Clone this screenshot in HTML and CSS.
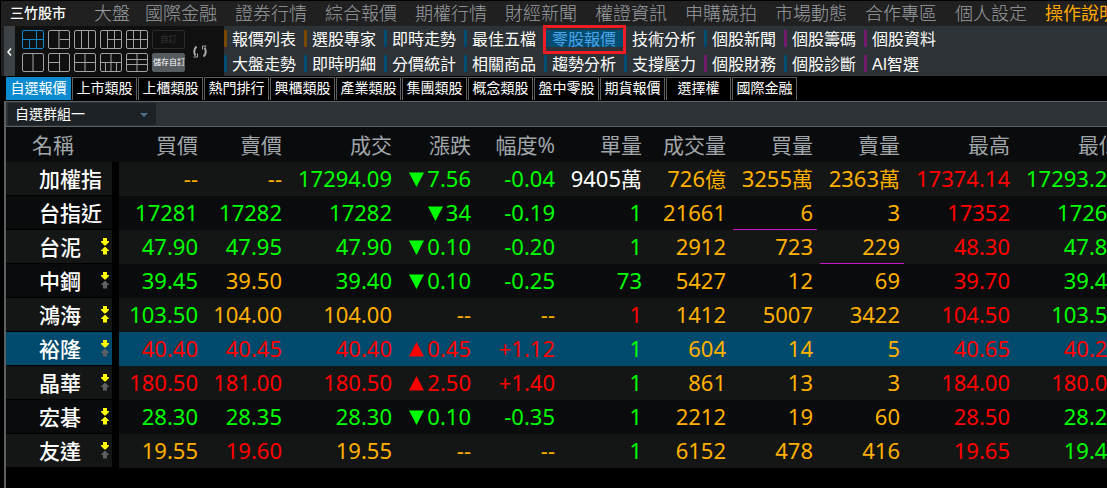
FILE: index.html
```html
<!DOCTYPE html>
<html lang="zh-Hant">
<head>
<meta charset="utf-8">
<title>三竹股市</title>
<link rel="stylesheet" href="styles.css">
</head>
<body>
<svg class="defs" aria-hidden="true">
  <symbol id="down" viewBox="0 0 15 15"><path d="M0 .5H15L7.5 15Z" fill="currentColor"/></symbol>
  <symbol id="up" viewBox="0 0 15 15"><path d="M7.500 0L15 14.500H0Z" fill="currentColor"/></symbol>
  <symbol id="both" viewBox="0 0 8 17"><path d="M2 0H6V3H8V4L4.500 7.500H3.500L0 4V3H2Z" fill="#ff0"/><path class="second" d="M3.500 9H4.500L8 12.500V13H6V16.500H2V13H0V12.500Z" fill="currentColor"/></symbol>
</svg>
<header class="topbar">
  <h1 class="brand">三竹股市</h1>
  <nav class="main-nav">
    <a href="#">大盤</a><a href="#">國際金融</a><a href="#">證券行情</a><a href="#">綜合報價</a><a href="#">期權行情</a><a href="#">財經新聞</a><a href="#">權證資訊</a><a href="#">申購競拍</a><a href="#">市場動態</a><a href="#">合作專區</a><a href="#">個人設定</a><a href="#" class="help">操作說明</a>
  </nav>
</header>
<div class="toolbar">
  <button class="collapse" aria-label="收合"><svg width="5" height="8" viewBox="0 0 5 8"><path d="M4 .5L1 4L4 7.500" fill="none" stroke="#fff" stroke-width="1.500"/></svg></button>
  <div class="layouts">
    <div class="layout-grid">
      <button class="layout active" aria-label="版面 1"><svg viewBox="0 0 22 19"><rect x=".5" y=".5" width="21" height="18" rx="1.500"/><path d="M1 9.500H21M14.500 1V18M7.500 10V18"/></svg></button>
      <button class="layout" aria-label="版面 2"><svg viewBox="0 0 22 19"><path class="thick" d="M11 1V18"/><rect x=".5" y=".5" width="21" height="18" rx="1.500"/><path d="M12 9.500H21"/></svg></button>
      <button class="layout" aria-label="版面 3"><svg viewBox="0 0 22 19"><rect x=".5" y=".5" width="21" height="18" rx="1.500"/><path d="M7.500 1V18M14.500 1V18"/></svg></button>
      <button class="layout" aria-label="版面 4"><svg viewBox="0 0 22 19"><rect x=".5" y=".5" width="21" height="18" rx="1.500"/><path d="M7.500 1V18M14.500 1V18M8 9.500H21"/></svg></button>
      <button class="layout" aria-label="版面 5"><svg viewBox="0 0 22 19"><rect x=".5" y=".5" width="21" height="18" rx="1.500"/><path d="M7.500 1V18M14.500 1V18M1 9.500H21"/></svg></button>
      <button class="layout" aria-label="版面 6"><svg viewBox="0 0 22 19"><path class="thick" d="M11 1V18"/><rect x=".5" y=".5" width="21" height="18" rx="1.500"/></svg></button>
      <button class="layout" aria-label="版面 7"><svg viewBox="0 0 22 19"><rect x=".5" y=".5" width="21" height="18" rx="1.500"/><path d="M11.500 1V18M1 9.500H11"/></svg></button>
      <button class="layout" aria-label="版面 8"><svg viewBox="0 0 22 19"><path class="thick" d="M11 1V18"/><rect x=".5" y=".5" width="21" height="18" rx="1.500"/><path d="M1 9.500H21"/></svg></button>
      <button class="layout" aria-label="版面 9"><svg viewBox="0 0 22 19"><path class="thick" d="M11 1V18"/><rect x=".5" y=".5" width="21" height="18" rx="1.500"/><path d="M1 9.500H21M5.500 10V18M16.500 10V18"/></svg></button>
      <button class="layout" aria-label="版面 10"><svg viewBox="0 0 22 19"><path class="thick" d="M11 1V18"/><rect x=".5" y=".5" width="21" height="18" rx="1.500"/><path d="M1 6.500H21M1 11.500H21"/></svg></button>
    </div>
    <div class="custom">
      <button class="custom-btn" disabled>自訂</button>
      <button class="custom-btn save">儲存自訂</button>
    </div>
    <button class="swap" aria-label="切換"><svg width="14" height="13" viewBox="0 0 14 13" fill="none" stroke="#a8a8a8"><path d="M3.500 1.500Q-.5 5.500 2.500 10.500" stroke-width="2"/><path d="M.5 12H4.500V8.500"/><path d="M10.500 11.500Q14.500 7.500 11.500 2.500" stroke-width="2"/><path d="M13.500 1H9.500V4.500"/></svg></button>
  </div>
  <nav class="functions">
    <a href="#" class="fn brown">報價列表</a><a href="#" class="fn brown">選股專家</a><a href="#" class="fn">即時走勢</a><a href="#" class="fn">最佳五檔</a><a href="#" class="fn current">零股報價</a><a href="#" class="fn plain">技術分析</a><a href="#" class="fn">個股新聞</a><a href="#" class="fn purple">個股籌碼</a><a href="#" class="fn purple">個股資料</a>
    <a href="#" class="fn">大盤走勢</a><a href="#" class="fn">即時明細</a><a href="#" class="fn">分價統計</a><a href="#" class="fn">相關商品</a><a href="#" class="fn">趨勢分析</a><a href="#" class="fn">支撐壓力</a><a href="#" class="fn purple">個股財務</a><a href="#" class="fn">個股診斷</a><a href="#" class="fn purple">AI智選</a>
  </nav>
</div>
<nav class="tabs">
  <a href="#" class="tab active">自選報價</a><a href="#" class="tab">上市類股</a><a href="#" class="tab">上櫃類股</a><a href="#" class="tab">熱門排行</a><a href="#" class="tab">興櫃類股</a><a href="#" class="tab">產業類股</a><a href="#" class="tab">集團類股</a><a href="#" class="tab">概念類股</a><a href="#" class="tab">盤中零股</a><a href="#" class="tab">期貨報價</a><a href="#" class="tab">選擇權</a><a href="#" class="tab">國際金融</a>
</nav>
<main class="panel">
  <div class="groupbar">
    <div class="group">
      <select aria-label="自選群組"><option>自選群組一</option></select>
      <svg class="caret" width="8" height="4" viewBox="0 0 8 4"><path d="M0 0H8L4 4Z" fill="#47718e"/></svg>
    </div>
  </div>
  <div class="quotes">
    <table>
      <colgroup><col class="w-name"><col class="w-bid"><col class="w-ask"><col class="w-wide"><col class="w-chg"><col class="w-ask"><col class="w-vol"><col class="w-ask"><col class="w-vol"><col class="w-vol"><col class="w-wide"><col class="w-wide"></colgroup>
      <thead>
        <tr><th>名稱</th><th>買價</th><th>賣價</th><th>成交</th><th>漲跌</th><th>幅度%</th><th>單量</th><th>成交量</th><th>買量</th><th>賣量</th><th>最高</th><th>最低</th></tr>
      </thead>
      <tbody>
        <tr><th><div class="name">加權指</div></th><td>--</td><td>--</td><td class="g">17294.09</td><td class="g"><svg class="tri"><use href="#down"/></svg>7.56</td><td class="g">-0.04</td><td class="w">9405<span class="unit">萬</span></td><td>726<span class="unit">億</span></td><td>3255<span class="unit">萬</span></td><td>2363<span class="unit">萬</span></td><td class="r">17374.14</td><td class="g">17293.22</td></tr>
        <tr><th><div class="name">台指近</div></th><td class="g">17281</td><td class="g">17282</td><td class="g">17282</td><td class="g"><svg class="tri"><use href="#down"/></svg>34</td><td class="g">-0.19</td><td class="g">1</td><td>21661</td><td class="mark">6</td><td>3</td><td class="r">17352</td><td class="g">17260</td></tr>
        <tr><th><div class="name">台泥<svg class="trade"><use href="#both"/></svg></div></th><td class="g">47.90</td><td class="g">47.95</td><td class="g">47.90</td><td class="g"><svg class="tri"><use href="#down"/></svg>0.10</td><td class="g">-0.20</td><td class="g">1</td><td>2912</td><td>723</td><td class="mark">229</td><td class="r">48.30</td><td class="g">47.80</td></tr>
        <tr><th><div class="name">中鋼<svg class="trade off"><use href="#both"/></svg></div></th><td class="g">39.45</td><td>39.50</td><td class="g">39.40</td><td class="g"><svg class="tri"><use href="#down"/></svg>0.10</td><td class="g">-0.25</td><td class="g">73</td><td>5427</td><td>12</td><td>69</td><td class="r">39.70</td><td class="g">39.40</td></tr>
        <tr><th><div class="name">鴻海<svg class="trade"><use href="#both"/></svg></div></th><td class="g">103.50</td><td>104.00</td><td>104.00</td><td>--</td><td>--</td><td class="r">1</td><td>1412</td><td>5007</td><td>3422</td><td class="r">104.50</td><td class="g">103.50</td></tr>
        <tr class="selected"><th><div class="name">裕隆<svg class="trade off"><use href="#both"/></svg></div></th><td class="r">40.40</td><td class="r">40.45</td><td class="r">40.40</td><td class="r"><svg class="tri"><use href="#up"/></svg>0.45</td><td class="r">+1.12</td><td class="g">1</td><td>604</td><td>14</td><td>5</td><td class="r">40.65</td><td class="r">40.20</td></tr>
        <tr><th><div class="name">晶華<svg class="trade off"><use href="#both"/></svg></div></th><td class="r">180.50</td><td class="r">181.00</td><td class="r">180.50</td><td class="r"><svg class="tri"><use href="#up"/></svg>2.50</td><td class="r">+1.40</td><td class="g">1</td><td>861</td><td>13</td><td>3</td><td class="r">184.00</td><td class="r">180.00</td></tr>
        <tr><th><div class="name">宏碁<svg class="trade"><use href="#both"/></svg></div></th><td class="g">28.30</td><td class="g">28.35</td><td class="g">28.30</td><td class="g"><svg class="tri"><use href="#down"/></svg>0.10</td><td class="g">-0.35</td><td class="g">1</td><td>2212</td><td>19</td><td>60</td><td class="r">28.50</td><td class="g">28.20</td></tr>
        <tr><th><div class="name">友達<svg class="trade off"><use href="#both"/></svg></div></th><td>19.55</td><td class="r">19.60</td><td>19.55</td><td>--</td><td>--</td><td class="g">1</td><td>6152</td><td>478</td><td>416</td><td class="r">19.65</td><td class="g">19.45</td></tr>
      </tbody>
    </table>
  </div>
</main>
</body>
</html>
```
FILE: styles.css
```css
* { box-sizing: border-box; }

body {
  margin: 0;
  min-height: 100vh;
  display: flex;
  flex-direction: column;
  overflow: hidden;
  background: #000;
  border-left: 1px solid #000;
  border-top: 1px solid #000;
  color: #fff;
  font-family: "Liberation Sans", "Noto Sans CJK TC", sans-serif;
}

a { color: inherit; text-decoration: none; }
button { padding: 0; border: 0; background: none; color: inherit; font: inherit; }
.defs { display: none; }

.topbar {
  display: flex;
  height: 25px;
  padding-left: 9px;
  background: #202020;
  white-space: nowrap;
}
.brand { flex: none; width: 84px; margin: 0; font-size: 14px; font-weight: 500; line-height: 25px; }
.main-nav {
  display: grid;
  grid-template-columns: 51px repeat(11, 90px);
  color: #9a9ea0;
  font-size: 18px;
  line-height: 27px;
  font-weight: 300;
}
.help { color: #ffa800; font-weight: 400; }

.toolbar {
  display: flex;
  height: 50px;
  padding-left: 3px;
  background: #202020;
}
.collapse { flex: none; width: 11px; background: #3c4245; }
.layouts {
  flex: none;
  display: flex;
  align-items: center;
  gap: 4px;
  width: 209px;
  padding-left: 7px;
  background: #101010;
}
.layout-grid { display: grid; grid-template-columns: repeat(5, 22px); gap: 4px; }
.layout { display: block; height: 19px; color: #a2a2a2; }
.layout.active { color: #1085cb; }
.layout svg { display: block; width: 22px; height: 19px; fill: none; stroke: currentColor; }
.layout .thick { stroke: #5a5a5a; stroke-width: 2; }
.custom { display: grid; gap: 4px; }
.custom-btn {
  width: 33px;
  height: 19px;
  border: 1px solid #2c2c2c;
  border-radius: 2px;
  color: #3a3a3a;
  font-size: 8px;
  line-height: 17px;
  white-space: nowrap;
}
.custom-btn.save { border-color: #555b5f; background: #555b5f; color: #fff; }
.swap { margin-left: 4px; line-height: 0; }

.functions {
  flex: 1;
  display: grid;
  grid-template-columns: repeat(9, 80px);
  grid-auto-rows: 17px;
  align-content: center;
  row-gap: 8px;
  background: #2d3236;
  font-size: 16px;
  line-height: 19px;
  white-space: nowrap;
}
.fn { position: relative; padding-left: 5px; border-left: 3px solid #004b70; }
.fn.brown { border-color: #784800; }
.fn.purple { border-color: #701b6c; }
.fn.plain { border-color: transparent; }
.fn.current { margin-right: 1px; background: #004b70; color: #4fa3e6; }
.fn.current::after {
  content: "";
  position: absolute;
  inset: -5px -3px -7px -4px;
  border: 3px solid #ee1c24;
}

.tabs { display: flex; gap: 1px; height: 25px; padding: 1px 0 1px 5px; background: #000; }
.tab {
  flex: none;
  width: 65px;
  border: 1px solid #5c6062;
  border-bottom: 0;
  font-size: 14px;
  line-height: 20px;
  text-align: center;
  white-space: nowrap;
}
.tab.active { border-color: #0c8bd0; background: #0c8bd0; }

.panel { flex: 1; margin-left: 3px; border-left: 2px solid #5c6062; }
.groupbar {
  display: flex;
  height: 26px;
  padding: 1px 0 1px 2px;
  border: solid #5c6062;
  border-width: 1px 0;
  background: #2d3236;
}
.group { position: relative; width: 148px; background: #1d2226; }
.group select {
  width: 100%;
  height: 22px;
  padding: 0 7px;
  border: 0;
  appearance: none;
  background: transparent;
  color: #fff;
  font: 14px/22px "Liberation Sans", "Noto Sans CJK TC", sans-serif;
}
.caret { position: absolute; right: 8px; top: 10px; }

.quotes { overflow: hidden; }
table { width: 1118px; table-layout: fixed; border-collapse: separate; border-spacing: 0; }
.w-name { width: 113px; }
.w-bid { width: 83px; }
.w-ask { width: 84px; }
.w-chg { width: 79px; }
.w-vol { width: 87px; }
.w-wide { width: 110px; }

th, td { padding: 0 4px 0 0; text-align: right; white-space: nowrap; }
thead th {
  height: 35px;
  background: #0a0b0d;
  color: #a0a6a9;
  font-family: "Noto Sans", "Noto Sans CJK TC", sans-serif;
  font-size: 21px;
  font-weight: 400;
  line-height: 32px;
}
thead th:first-child { padding-left: 26px; text-align: left; }
tbody td {
  height: 34px;
  padding-bottom: 3px;
  background-color: #0a0b0d;
  color: #ffb000;
  font-family: "Noto Sans", "Noto Sans CJK TC", sans-serif;
  font-size: 22px;
  line-height: 30px;
}
tbody th { padding: 0 7px 0 0; background: #000; font-weight: 500; }
.name {
  display: flex;
  align-items: center;
  justify-content: space-between;
  height: 33px;
  margin-bottom: 1px;
  padding: 0 3px 1px 33px;
  background: #0a0b0d;
  font-family: "Noto Sans CJK TC", sans-serif;
  font-size: 21px;
  line-height: 32px;
}
tbody tr:nth-child(odd) td, tbody tr:nth-child(odd) .name { background-color: #141615; }
tbody tr.selected td, tbody tr.selected .name { background-color: #004b6d; }
tbody .g { color: #0f0; }
tbody .r { color: #f00; }
tbody .w { color: #fff; }
.unit { font-size: 21px; line-height: 24px; }
tbody td.mark {
  background-image: linear-gradient(#c818c8, #c818c8);
  background-repeat: no-repeat;
  background-size: calc(100% - 3px) 1px;
  background-position: right bottom;
}
.tri { width: 15px; height: 15px; margin-right: 3px; vertical-align: baseline; }
.trade { width: 8px; height: 17px; color: #ff0; }
.trade.off { color: #5c6062; }
```
